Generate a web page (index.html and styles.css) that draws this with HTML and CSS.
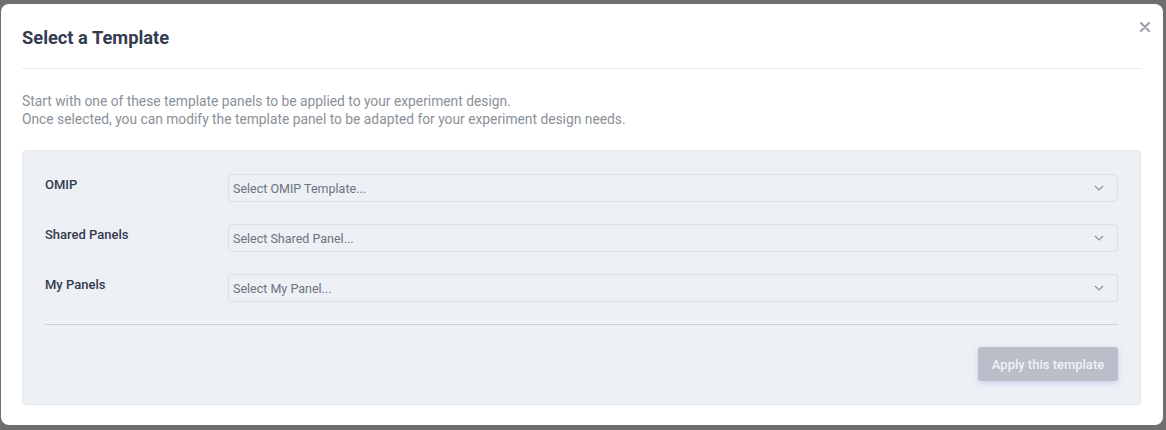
FILE: index.html
```html
<!DOCTYPE html>
<html lang="en">
<head>
    <meta charset="UTF-8">
    <meta name="viewport" content="width=device-width, initial-scale=1.0">
    <title>Select a Template</title>
    <link rel="stylesheet" href="styles.css">
</head>
<body>
    <div class="modal">
        <button class="modal-close" type="button" aria-label="Close">
            <svg width="10" height="10" viewBox="0 0 10 10"><path d="M1 1L9 9M9 1L1 9" stroke="#9ba1ad" stroke-width="2.2" stroke-linecap="round"/></svg>
        </button>
        <div class="modal-header">
            <h2>Select a Template</h2>
        </div>
        <p class="intro">
            Start with one of these template panels to be applied to your experiment design.<br>
            Once selected, you can modify the template panel to be adapted for your experiment design needs.
        </p>
        <div class="panel">
            <div class="form-row">
                <label>OMIP</label>
                <div class="select">
                    <span>Select OMIP Template...</span>
                    <svg width="10" height="6" viewBox="0 0 10 6"><path d="M1 1L5 5L9 1" fill="none" stroke="#8b929d" stroke-width="1.2"/></svg>
                </div>
            </div>
            <div class="form-row">
                <label>Shared Panels</label>
                <div class="select">
                    <span>Select Shared Panel...</span>
                    <svg width="10" height="6" viewBox="0 0 10 6"><path d="M1 1L5 5L9 1" fill="none" stroke="#8b929d" stroke-width="1.2"/></svg>
                </div>
            </div>
            <div class="form-row">
                <label>My Panels</label>
                <div class="select">
                    <span>Select My Panel...</span>
                    <svg width="10" height="6" viewBox="0 0 10 6"><path d="M1 1L5 5L9 1" fill="none" stroke="#8b929d" stroke-width="1.2"/></svg>
                </div>
            </div>
            <hr>
            <div class="actions">
                <button type="button" class="btn-apply" disabled>Apply this template</button>
            </div>
        </div>
    </div>
</body>
</html>
```

FILE: styles.css
```css
body {
    margin: 0;
    padding: 4px 3px 0 1px;
    background-color: #6f6f6f;
    font-family: Roboto, "Liberation Sans", Arial, sans-serif;
    height: 430px;
    box-sizing: border-box;
    overflow: hidden;
}
.modal {
    position: relative;
    background-color: white;
    border-radius: 8px;
    height: 421px;
    padding: 0 22px 0 21px;
    box-sizing: border-box;
}
.modal-close {
    position: absolute;
    top: 16px;
    right: 13px;
    background: none;
    border: none;
    padding: 0;
    cursor: pointer;
}
.modal-header {
    padding: 22px 0 18px;
    border-bottom: 1px solid #e9ecef;
    margin-right: -1px;
}
.modal-header h2 {
    margin: 0;
    font-size: 18.3px;
    line-height: 24px;
    font-weight: 700;
    color: #343b4f;
}
.intro {
    margin: 23px 0 22px;
    font-size: 13.8px;
    line-height: 18px;
    color: #8a9199;
}
.panel {
    background-color: #edf0f5;
    border: 1px solid #e4e7ec;
    border-radius: 4px;
    padding: 23px 22px 23px 22px;
}
.form-row {
    display: flex;
    align-items: flex-start;
    margin-bottom: 22px;
}
.form-row label {
    width: 183px;
    flex-shrink: 0;
    padding-top: 2px;
    font-size: 13px;
    line-height: 17px;
    font-weight: 500;
    color: #343b4f;
}
.select {
    flex: 1;
    height: 28px;
    box-sizing: border-box;
    display: flex;
    align-items: center;
    justify-content: space-between;
    padding: 0 13px 0 4px;
    border: 1px solid #dde1e7;
    border-radius: 4px;
    background-color: #edf0f5;
    font-size: 12.5px;
    color: #6c737e;
}
.panel hr {
    border: none;
    border-top: 1px solid #cdd2d9;
    margin: 0 0 22px;
}
.actions {
    display: flex;
    justify-content: flex-end;
}
.btn-apply {
    width: 140px;
    height: 34px;
    border: none;
    border-radius: 3px;
    background-color: #b9bec8;
    color: #f0f2f5;
    font-family: Roboto, "Liberation Sans", Arial, sans-serif;
    font-size: 13px;
    font-weight: 500;
    box-shadow: 0 2px 6px rgba(120, 110, 230, 0.25);
}
```
